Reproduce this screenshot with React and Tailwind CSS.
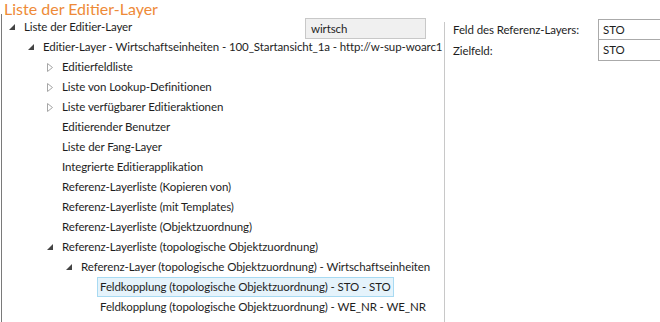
import React from "react";

const rows = [
  { level: 0, icon: "open", text: "Liste der Editier-Layer" },
  { level: 1, icon: "open", text: "Editier-Layer - Wirtschaftseinheiten - 100_Startansicht_1a - http://w-sup-woarc1" },
  { level: 2, icon: "closed", text: "Editierfeldliste" },
  { level: 2, icon: "closed", text: "Liste von Lookup-Definitionen" },
  { level: 2, icon: "closed", text: "Liste verfügbarer Editieraktionen" },
  { level: 2, icon: null, text: "Editierender Benutzer" },
  { level: 2, icon: null, text: "Liste der Fang-Layer" },
  { level: 2, icon: null, text: "Integrierte Editierapplikation" },
  { level: 2, icon: null, text: "Referenz-Layerliste (Kopieren von)" },
  { level: 2, icon: null, text: "Referenz-Layerliste (mit Templates)" },
  { level: 2, icon: null, text: "Referenz-Layerliste (Objektzuordnung)" },
  { level: 2, icon: "open", text: "Referenz-Layerliste (topologische Objektzuordnung)" },
  { level: 3, icon: "open", text: "Referenz-Layer (topologische Objektzuordnung) - Wirtschaftseinheiten" },
  { level: 4, icon: null, text: "Feldkopplung (topologische Objektzuordnung) - STO - STO", selected: true },
  { level: 4, icon: null, text: "Feldkopplung (topologische Objektzuordnung) - WE_NR - WE_NR" },
];

const pads = ["pl-[5px]", "pl-[24px]", "pl-[43px]", "pl-[62px]", "pl-[81px]"];

function Glyph({ kind }) {
  if (kind === "open") {
    return (
      <svg width="6" height="6" viewBox="0 0 6 6" className="block">
        <polygon points="6,0 6,6 0,6" fill="#444444" />
      </svg>
    );
  }
  if (kind === "closed") {
    return (
      <svg width="6" height="9" viewBox="0 0 6 9" className="block">
        <polygon points="0.5,0.5 5.5,4.5 0.5,8.5" fill="none" stroke="#a6a6a6" strokeWidth="1" />
      </svg>
    );
  }
  return null;
}

export default function App() {
  return (
    <div className="w-[660px] h-[322px] bg-white overflow-hidden text-[#1e1e1e] text-[11.5px] tracking-[-0.1px] leading-[20px] font-['Lato',sans-serif]">
      <div className="h-[17px] pl-[4px] text-[16px] leading-[17px] tracking-normal text-[#ee8a38] whitespace-nowrap">
        Liste der Editier-Layer
      </div>
      <div className="flex h-[305px]">
        <div className="relative w-[443px] shrink-0 ml-[1px] border-l border-[#7a7a7a] -mt-[3px] pt-[3px] overflow-hidden">
          <div className="absolute left-[303px] top-[4px] w-[121px] h-[21px] bg-[#f0f0f0] border border-[#c8c8c8] pl-[5px] leading-[19px]">
            wirtsch
          </div>
          {rows.map((r, i) => (
            <div key={i} className={`flex items-center h-[20px] ${pads[r.level]}`}>
              <div className="w-[17px] shrink-0 flex items-center justify-start pl-[2px]">
                <Glyph kind={r.icon} />
              </div>
              <div
                className={
                  r.selected
                    ? "h-[20px] -ml-[3px] px-[2px] bg-[#e5f3fb] border border-[#a8daf2] leading-[18px] whitespace-nowrap"
                    : "whitespace-nowrap"
                }
              >
                {r.text}
              </div>
            </div>
          ))}
        </div>
        <div className="mt-[5px] border-l border-[#c8c8c8] flex-1 pl-[8px]">
          <div className="-mt-[3px]">
            <div className="flex items-center h-[21px]">
              <div className="w-[145px] shrink-0 whitespace-nowrap">Feld des Referenz-Layers:</div>
              <div className="flex-1 h-[21px] border border-[#aaaaaa] border-r-0 pl-[4px] leading-[19px]">STO</div>
            </div>
            <div className="flex items-center h-[21px]">
              <div className="w-[145px] shrink-0">Zielfeld:</div>
              <div className="flex-1 h-[21px] border border-t-0 border-[#aaaaaa] border-r-0 pl-[4px] leading-[20px]">STO</div>
            </div>
          </div>
        </div>
      </div>
    </div>
  );
}
